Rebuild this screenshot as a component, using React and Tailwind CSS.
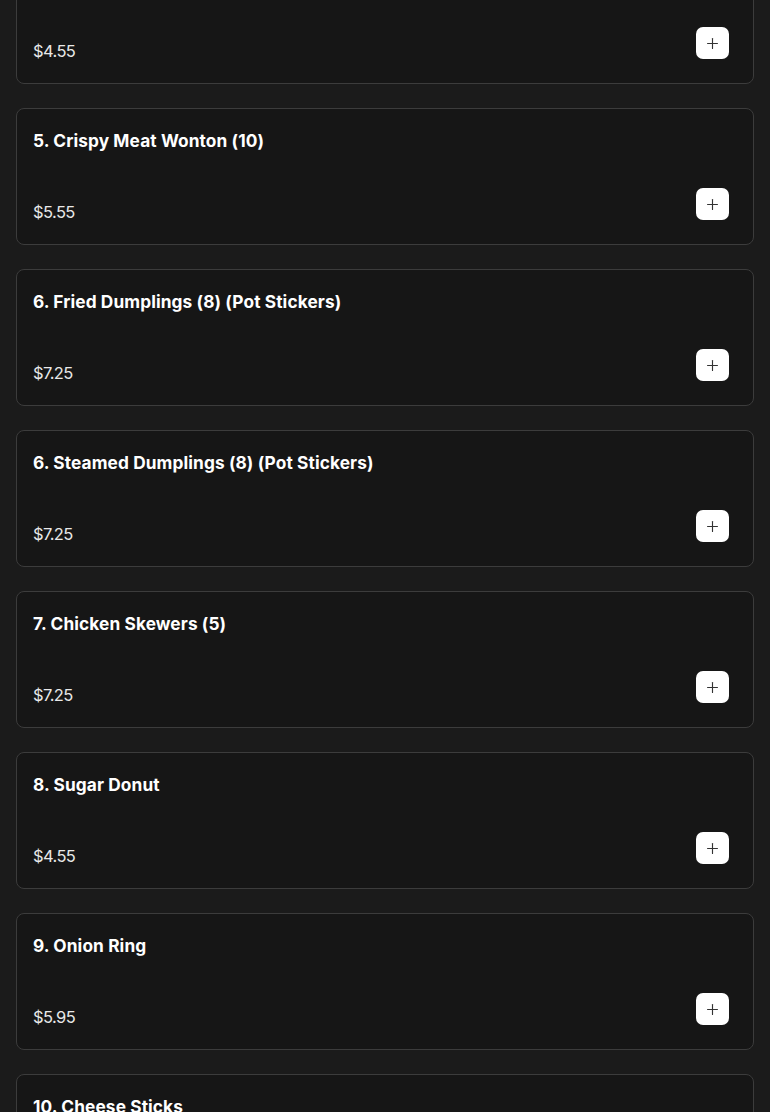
import React from "react";
import { Plus } from "lucide-react";

const items = [
  { name: "4. Egg Rolls (2)", price: "$4.55" },
  { name: "5. Crispy Meat Wonton (10)", price: "$5.55" },
  { name: "6. Fried Dumplings (8) (Pot Stickers)", price: "$7.25" },
  { name: "6. Steamed Dumplings (8) (Pot Stickers)", price: "$7.25" },
  { name: "7. Chicken Skewers (5)", price: "$7.25" },
  { name: "8. Sugar Donut", price: "$4.55" },
  { name: "9. Onion Ring", price: "$5.95" },
  { name: "10. Cheese Sticks", price: "$5.95" },
];

export default function App() {
  return (
    <div
      className="h-[1112px] overflow-hidden bg-[#1b1b1b] px-4"
      style={{ fontFamily: "Inter, 'Noto Sans', sans-serif" }}
    >
      <div className="-mt-[53px] flex flex-col gap-6">
        {items.map((it, i) => (
          <div
            key={i}
            className="rounded-lg border border-[#3c3c3c] bg-[#161616] pl-4 pr-6 pt-4 pb-6"
          >
            <div className="h-7 text-[17.3px] font-bold leading-[32px] tracking-[0.1px] text-white">
              {it.name}
            </div>
            <div className="mt-[35px] flex h-8 items-start justify-between">
              <div className="mt-[12px] text-[16.5px] leading-6 tracking-[-0.6px] text-[#e8e8e8]">
                {it.price}
              </div>
              <button className="flex h-8 w-[33px] items-center justify-center rounded-[7px] bg-white">
                <Plus size={17} strokeWidth={1.6} color="#333" />
              </button>
            </div>
          </div>
        ))}
      </div>
    </div>
  );
}
